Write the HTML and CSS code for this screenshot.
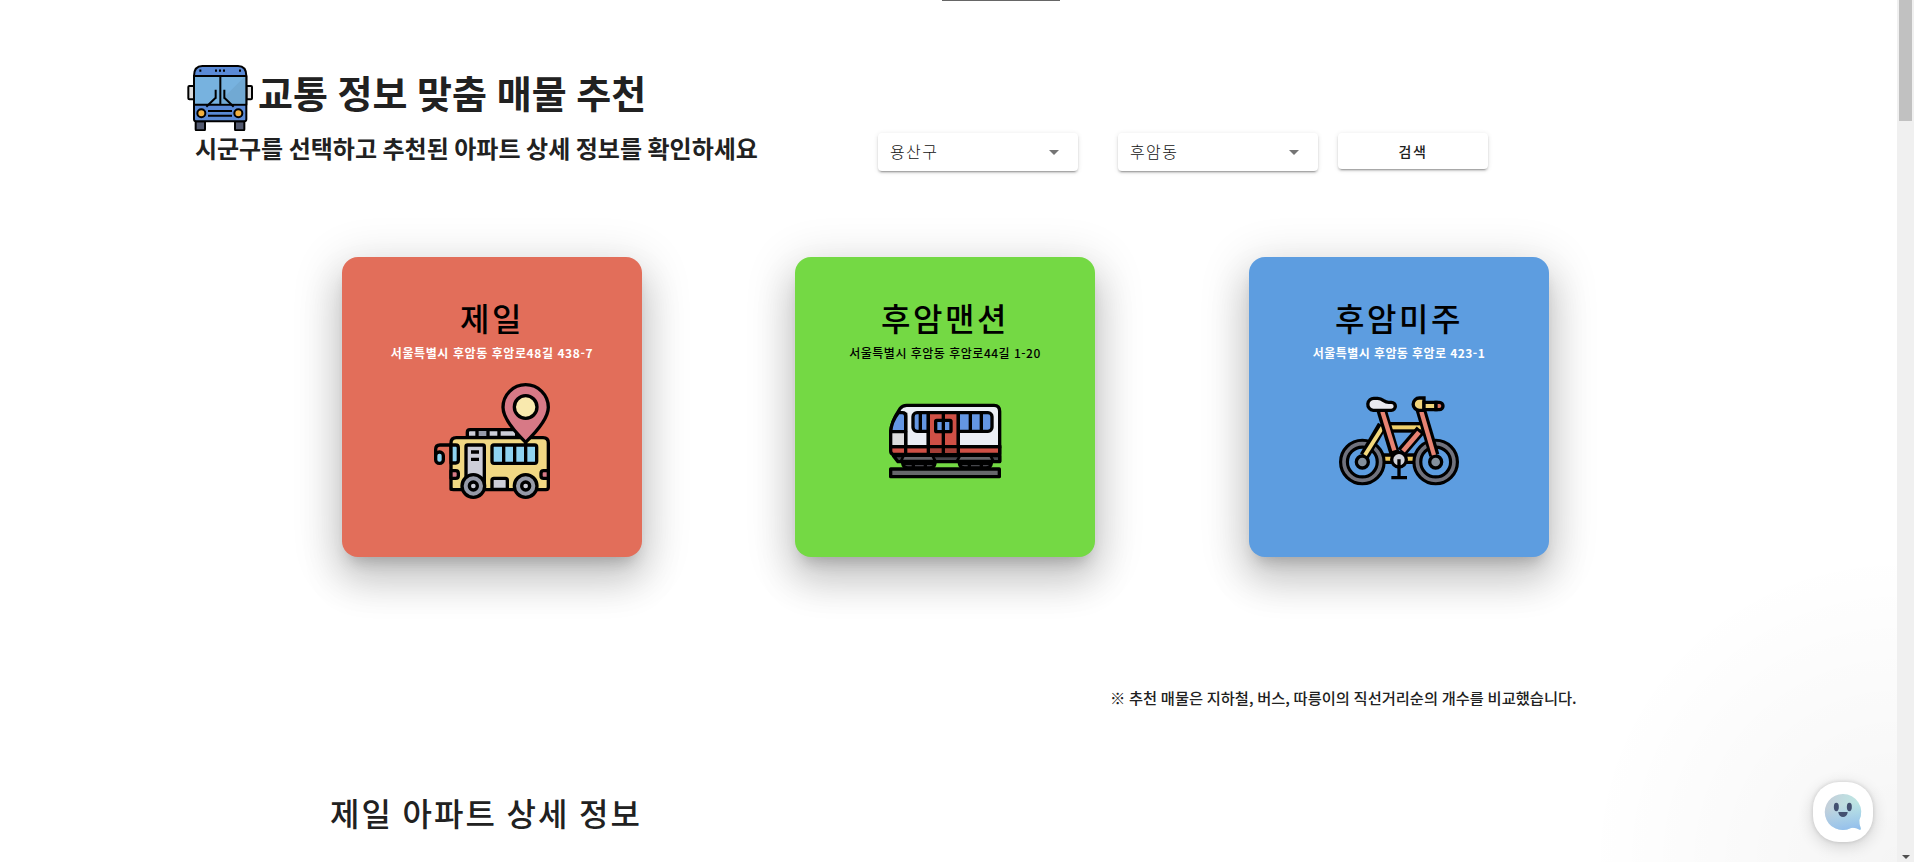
FILE: index.html
```html
<!DOCTYPE html>
<html lang="ko">
<head>
<meta charset="utf-8">
<title>교통 정보 맞춤 매물 추천</title>
<link rel="stylesheet" href="styles.css">
</head>
<body>
<div class="app">
  <main class="page">
    <div class="tab-line"></div>
    <header class="hero">
      <div class="title-row">
        <svg class="title-icon" viewBox="21 30 198 198" stroke="#000" stroke-width="6" stroke-linejoin="round">
          <path d="M47 199h28v24q0 3-3 3H50q-3 0-3-3zM165 199h28v24q0 3-3 3h-22q-3 0-3-3z" fill="#52596f"/>
          <path d="M42 93H28q-3 0-3 3v34q0 3 3 3h14zM199 93h14q3 0 3 3v34q0 3-3 3h-14z" fill="#dedede"/>
          <path d="M42 63q0-30 25-30h107q25 0 25 30v130q0 6-6 6H48q-6 0-6-6z" fill="#5a8ad6"/>
          <path d="M42 63h157v86H42z" fill="#77b2df"/>
          <path d="M192 67l-78 78h81V67z" fill="#71a9d3" stroke="none"/>
          <path d="M121 63v86M107 104v27M133 104v27M79 155l28-27M161 155l-28-27M84 168h72M84 182h72" fill="none"/>
          <path d="M58 47h6M105 47h6M117 47h6M129 47h6M177 47h6" stroke-width="7"/>
          <circle cx="64" cy="175" r="12" fill="#f3b13f"/><circle cx="175" cy="175" r="12" fill="#f3b13f"/>
        </svg>
        <h1 class="title">교통 정보 맞춤 매물 추천</h1>
      </div>
      <div class="filter-row">
        <p class="subtitle">시군구를 선택하고 추천된 아파트 상세 정보를 확인하세요</p>
        <div class="select"><span>용산구</span><i class="caret"></i></div>
        <div class="select"><span>후암동</span><i class="caret"></i></div>
        <button class="search">검색</button>
      </div>
    </header>

    <section class="cards">
      <article class="card card-red">
        <h2 class="card-title">제일</h2>
        <p class="address">서울특별시 후암동 후암로48길 438-7</p>
        <svg class="card-icon" viewBox="24 21 384 384" stroke="#000" stroke-width="10" stroke-linejoin="round">
          <path d="M142 202v-15q0-8 8-8h140v23z" fill="#cdced8"/>
          <path d="M170 184h34v14h-34z" fill="#969aa8" stroke="none"/>
          <path d="M171 179v20M204 179v20M237 179v20"/>
          <path d="M93 358V219q0-16 16-16h260q16 0 16 16v133q0 7-7 7H100q-7 0-7-7z" fill="#f1d883"/>
          <path d="M93 225H60q-13 0-13 13v22" fill="none"/>
          <rect x="47" y="246" width="23" height="34" rx="11" fill="#8fd3f1"/>
          <path d="M93 225h14q8 0 8 8v38q0 8-8 8H93z" fill="#8fd3f1"/>
          <path d="M93 302h14q8 0 8 8v7q0 8-8 8H93zM385 302h-14q-8 0-8 8v7q0 8 8 8h14z" fill="#d77986"/>
          <path d="M138 355V230q0-5 5-5h45q5 0 5 5v125z" fill="#cdced8"/>
          <path d="M153 246h24M153 268h24M216 358v-27q0-6 6-6h34q6 0 6 6v27z" fill="#cdced8"/>
          <rect x="216" y="225" width="134" height="55" rx="6" fill="#8fd3f1"/>
          <path d="M251 225v55M284 225v55M317 219v61"/>
          <path d="M317 217Q249 151 249 112a67 67 0 0 1 136 0Q385 151 317 217z" fill="#d77986"/>
          <circle cx="317" cy="111" r="34" fill="#f9e9ae"/>
          <circle cx="160" cy="348" r="34" fill="#969aa8"/><circle cx="160" cy="348" r="12" fill="#cdced8"/>
          <circle cx="317" cy="348" r="34" fill="#969aa8"/><circle cx="317" cy="348" r="12" fill="#cdced8"/>
        </svg>
      </article>
      <article class="card card-green">
        <h2 class="card-title">후암맨션</h2>
        <p class="address">서울특별시 후암동 후암로44길 1-20</p>
        <svg class="card-icon" viewBox="33 -9 384 384" stroke="#000" stroke-width="10" stroke-linejoin="round">
          <path d="M70 227h319v18H84z" fill="#45464b"/>
          <path d="M98 250h97q-2 14-16 14h-65q-14 0-16-14zM268 250h96q-2 14-16 14h-64q-14 0-16-14z" fill="#45464b"/>
          <path d="M130 250v13M166 250v13M298 250v13M334 250v13"/>
          <path d="M101 227h86l9 16H93zM270 227h91l9 16H261z" fill="#66676b" stroke-width="8"/>
          <path d="M62 203V158q0-30 28-72 7-10 20-10h262q17 0 17 18v109z" fill="#ebeef5"/>
          <path d="M62 155q2-30 23-57h12q10 0 10 10v47z" fill="#6496e3"/>
          <path d="M62 155h45v46H62z" fill="#dcdcdd"/>
          <rect x="129" y="98" width="237" height="56" rx="12" fill="#6496e3"/>
          <path d="M151 98v56M301 98v56M334 98v56"/>
          <path d="M175 98h90v105h-90z" fill="#cf5046"/>
          <rect x="197" y="121" width="46" height="34" rx="3" fill="#6496e3"/>
          <path d="M62 200h327v23H68q-6-3-6-10z" fill="#cf5046"/>
          <path d="M179 205h82v13h-82z" fill="#a43e37" stroke="none"/>
          <path d="M107 98v125M175 98v125M220 98v125M265 98v125M62 200h327M389 195v50"/>
          <rect x="62" y="267" width="326" height="23" fill="#66676b"/>
        </svg>
      </article>
      <article class="card card-blue">
        <h2 class="card-title">후암미주</h2>
        <p class="address">서울특별시 후암동 후암로 423-1</p>
        <svg class="card-icon" viewBox="45 -9 384 384" fill="none" stroke="#000" stroke-width="10">
          <path d="M180 236h115" stroke-width="32"/>
          <path d="M180 236h115" stroke="#edc95d" stroke-width="12"/>
          <circle cx="127" cy="246" r="55" stroke-width="30"/><circle cx="127" cy="246" r="55" stroke="#70727d" stroke-width="11"/>
          <circle cx="347" cy="246" r="55" stroke-width="30"/><circle cx="347" cy="246" r="55" stroke="#70727d" stroke-width="11"/>
          <circle cx="127" cy="246" r="18" fill="#83909d"/><circle cx="347" cy="246" r="18" fill="#83909d"/>
          <path d="M210 142h95" stroke-width="32"/><path d="M210 142h95" stroke="#efd06b" stroke-width="12"/>
          <path d="M187 136l-54 92" stroke-width="30"/><path d="M188 141l-53 84" stroke="#f2d87c" stroke-width="12"/>
          <path d="M302 150l-57 66" stroke-width="31"/><path d="M297 157l-48 56" stroke="#e78372" stroke-width="14"/>
          <path d="M184 88l40 133" stroke-width="31"/><path d="M187 95l36 116" stroke="#e78372" stroke-width="13"/>
          <path d="M302 88l41 138" stroke-width="31"/><path d="M304 95l38 130" stroke="#e78372" stroke-width="13"/>
          <path d="M163 55h10q9 0 18 7 7 5 15 5h8a12 12 0 0 1 0 24h-54a18 18 0 0 1 3-36z" fill="#e9e9ef"/>
          <path d="M312 54h-14a18 18 0 0 0 0 37h14z" fill="#f0d47b"/>
          <path d="M312 67h36v22h-36z" fill="#f0d47b"/><path d="M348 67h10a11 11 0 0 1 0 22h-10z" fill="#dd7563"/>
          <circle cx="237" cy="239" r="22" fill="#d0d3db"/><path d="M237 238v55M214 293h47"/>
        </svg>
      </article>
    </section>

    <p class="note">※ 추천 매물은 지하철, 버스, 따릉이의 직선거리순의 개수를 비교했습니다.</p>
    <h2 class="detail-title">제일 아파트 상세 정보</h2>
  </main>
  <aside class="scrollbar"><div class="thumb"></div><i class="down"></i></aside>
</div>
<div class="glow"></div>
<button class="chat" aria-label="채팅">
  <svg viewBox="759 660 180 180" width="60" height="60">
    <defs>
      <linearGradient id="tone" x1="0" y1="0" x2="1" y2=".3"><stop offset="0" stop-color="#c5cbd8"/><stop offset=".5" stop-color="#c0dce0"/><stop offset="1" stop-color="#bce9e4"/></linearGradient>
      <linearGradient id="shade" x1=".4" y1="0" x2=".6" y2="1"><stop offset=".3" stop-color="#98c0ea" stop-opacity="0"/><stop offset="1" stop-color="#94bfec"/></linearGradient>
    </defs>
    <path d="M849 696a54 54 0 1 0 24 102q13-2 26 5 5 1 3-5-5-14-4-24a54 54 0 0 0-49-78z" fill="url(#tone)"/>
    <path d="M849 696a54 54 0 1 0 24 102q13-2 26 5 5 1 3-5-5-14-4-24a54 54 0 0 0-49-78z" fill="url(#shade)"/>
    <g fill="#435070"><ellipse cx="829" cy="735" rx="7.5" ry="12.5"/><ellipse cx="868" cy="735" rx="7.5" ry="12.5"/><path d="M836 750h26q1 0 1 2-4 13-14 13t-14-13q0-2 1-2z"/></g>
  </svg>
</button>
</body>
</html>
```
FILE: styles.css
```css
* { box-sizing: border-box; }
body {
  margin: 0;
  height: 862px;
  overflow: hidden;
  background: #fff;
  color: #212121;
  font-family: "Noto Sans CJK KR", sans-serif;
}
h1, h2, p { margin: 0; }
button { border: 0; padding: 0; font-family: inherit; }
svg { display: block; }
.app { display: flex; height: 862px; }
.page { width: 1897px; overflow: hidden; }
.tab-line { width: 118px; height: 1px; margin-left: 942px; background: #666; }

.hero { padding: 64px 0 0 187px; }
.title-row { display: flex; height: 68px; }
.title-icon { width: 66px; height: 66px; }
.title { margin-left: 5px; font-size: 38px; font-weight: 700; line-height: 54px; word-spacing: -1px; white-space: nowrap; }
.filter-row { display: flex; height: 38px; padding-left: 8px; }
.subtitle { width: 683px; font-size: 24px; font-weight: 700; line-height: 30px; letter-spacing: -.05px; word-spacing: -1px; white-space: nowrap; }
.select {
  display: flex;
  align-items: center;
  justify-content: space-between;
  width: 200px;
  height: 38px;
  margin-right: 40px;
  padding: 0 19px 0 12px;
  border-radius: 4px;
  background: #fff;
  box-shadow: 0 3px 1px -2px rgba(0,0,0,.2), 0 2px 2px rgba(0,0,0,.14), 0 1px 5px rgba(0,0,0,.12);
  color: #111;
  font-size: 16px;
  font-weight: 300;
  line-height: 24px;
  letter-spacing: 1.4px;
}
.select span { padding-bottom: 2px; }
.select + .select { margin-right: 20px; }
.caret { border: 5px solid transparent; border-top-color: #757575; border-bottom: 0; }
.search {
  width: 150px;
  height: 36px;
  padding-bottom: 1px;
  border-radius: 4px;
  background: #fff;
  box-shadow: 0 3px 1px -2px rgba(0,0,0,.2), 0 2px 2px rgba(0,0,0,.14), 0 1px 5px rgba(0,0,0,.12);
  color: #212121;
  font-size: 14px;
  font-weight: 500;
  letter-spacing: 1.6px;
}

.cards { display: flex; gap: 153px; padding: 86px 0 0 342px; }
.card {
  display: flex;
  flex-direction: column;
  align-items: center;
  width: 300px;
  height: 300px;
  padding-top: 37px;
  border-radius: 16px;
  color: #000;
  box-shadow: 0 11px 15px -7px rgba(0,0,0,.2), 0 24px 38px 3px rgba(0,0,0,.14), 0 9px 46px 8px rgba(0,0,0,.12);
}
.card-red { background: #e26e5a; }
.card-green { background: #74d944; }
.card-blue { margin-left: 1px; background: #5d9de0; }
.card-title { height: 49px; font-size: 32px; font-weight: 500; line-height: 46px; letter-spacing: 2.6px; }
.address { height: 20px; font-size: 12px; font-weight: 700; line-height: 20px; letter-spacing: .58px; white-space: nowrap; color: #fff; }
.card-green .address { font-weight: 500; letter-spacing: .5px; color: #000; }
.card-blue .address { letter-spacing: .42px; }
.card-icon { width: 128px; height: 128px; margin-top: 14px; }

.note { margin: 128px 0 0 1110px; height: 24px; font-size: 15.3px; font-weight: 500; line-height: 24px; word-spacing: -.6px; white-space: nowrap; }
.detail-title { margin: 80px 0 0 330px; font-size: 32px; font-weight: 500; line-height: 46px; letter-spacing: 2px; word-spacing: -1.3px; }

.scrollbar { display: flex; flex-direction: column; align-items: center; justify-content: space-between; width: 17px; background: #f0f0f0; }
.thumb { width: 13px; height: 121px; background: #c1c1c1; }
.down { margin-bottom: 3px; border: 4px solid transparent; border-top-color: #505050; border-bottom: 0; }

.glow {
  position: absolute;
  right: 17px;
  bottom: 0;
  width: 320px;
  height: 320px;
  background: radial-gradient(circle at 100% 100%, rgba(0,0,0,.04), transparent 312px);
}
.chat {
  position: absolute;
  right: 41px;
  bottom: 20px;
  width: 60px;
  height: 60px;
  border-radius: 26px;
  background: #fff;
  box-shadow: 0 4px 16px rgba(0,0,0,.16), 0 0 4px rgba(0,0,0,.14);
}
```
